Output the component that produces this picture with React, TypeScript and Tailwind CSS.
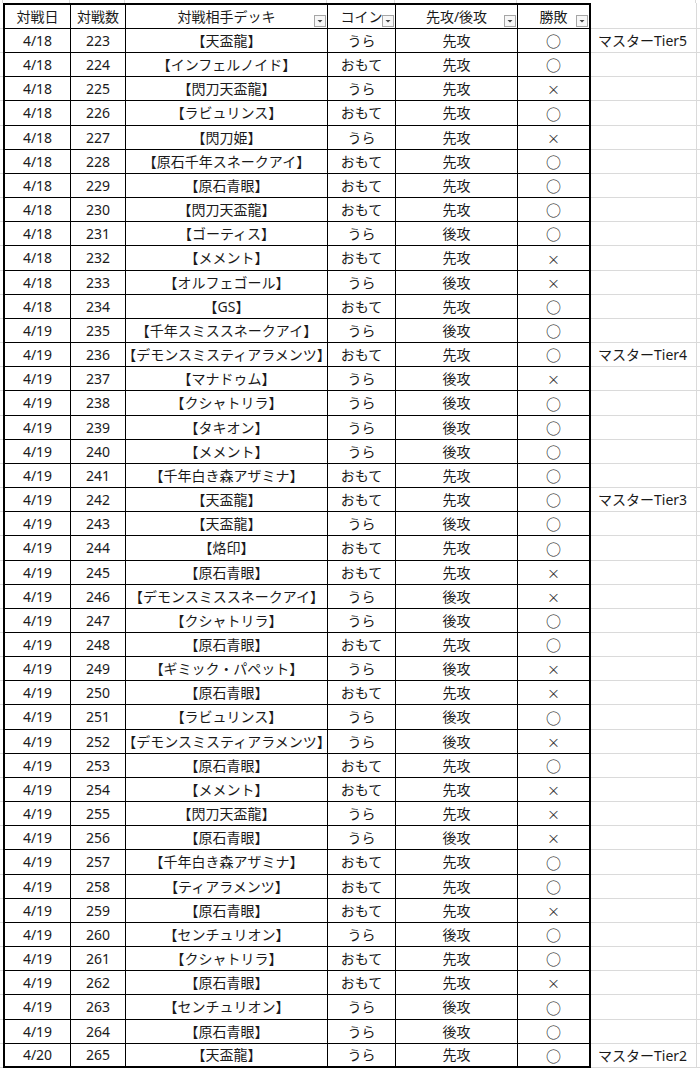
import { FC, ReactNode } from "react";

type Match = {
  date: string;
  no: number;
  deck: string;
  coin: string;
  order: string;
  win: boolean;
  note?: string;
};

const rows: Match[] = [
  { date: "4/18", no: 223, deck: "【天盃龍】", coin: "うら", order: "先攻", win: true, note: "マスターTier5" },
  { date: "4/18", no: 224, deck: "【インフェルノイド】", coin: "おもて", order: "先攻", win: true },
  { date: "4/18", no: 225, deck: "【閃刀天盃龍】", coin: "うら", order: "先攻", win: false },
  { date: "4/18", no: 226, deck: "【ラビュリンス】", coin: "おもて", order: "先攻", win: true },
  { date: "4/18", no: 227, deck: "【閃刀姫】", coin: "うら", order: "先攻", win: false },
  { date: "4/18", no: 228, deck: "【原石千年スネークアイ】", coin: "おもて", order: "先攻", win: true },
  { date: "4/18", no: 229, deck: "【原石青眼】", coin: "おもて", order: "先攻", win: true },
  { date: "4/18", no: 230, deck: "【閃刀天盃龍】", coin: "おもて", order: "先攻", win: true },
  { date: "4/18", no: 231, deck: "【ゴーティス】", coin: "うら", order: "後攻", win: true },
  { date: "4/18", no: 232, deck: "【メメント】", coin: "おもて", order: "先攻", win: false },
  { date: "4/18", no: 233, deck: "【オルフェゴール】", coin: "うら", order: "後攻", win: false },
  { date: "4/18", no: 234, deck: "【GS】", coin: "おもて", order: "先攻", win: true },
  { date: "4/19", no: 235, deck: "【千年スミススネークアイ】", coin: "うら", order: "後攻", win: true },
  { date: "4/19", no: 236, deck: "【デモンスミスティアラメンツ】", coin: "おもて", order: "先攻", win: true, note: "マスターTier4" },
  { date: "4/19", no: 237, deck: "【マナドゥム】", coin: "うら", order: "後攻", win: false },
  { date: "4/19", no: 238, deck: "【クシャトリラ】", coin: "うら", order: "後攻", win: true },
  { date: "4/19", no: 239, deck: "【タキオン】", coin: "うら", order: "後攻", win: true },
  { date: "4/19", no: 240, deck: "【メメント】", coin: "うら", order: "後攻", win: true },
  { date: "4/19", no: 241, deck: "【千年白き森アザミナ】", coin: "おもて", order: "先攻", win: true },
  { date: "4/19", no: 242, deck: "【天盃龍】", coin: "おもて", order: "先攻", win: true, note: "マスターTier3" },
  { date: "4/19", no: 243, deck: "【天盃龍】", coin: "うら", order: "後攻", win: true },
  { date: "4/19", no: 244, deck: "【烙印】", coin: "おもて", order: "先攻", win: true },
  { date: "4/19", no: 245, deck: "【原石青眼】", coin: "おもて", order: "先攻", win: false },
  { date: "4/19", no: 246, deck: "【デモンスミススネークアイ】", coin: "うら", order: "後攻", win: false },
  { date: "4/19", no: 247, deck: "【クシャトリラ】", coin: "うら", order: "後攻", win: true },
  { date: "4/19", no: 248, deck: "【原石青眼】", coin: "おもて", order: "先攻", win: true },
  { date: "4/19", no: 249, deck: "【ギミック・パペット】", coin: "うら", order: "後攻", win: false },
  { date: "4/19", no: 250, deck: "【原石青眼】", coin: "おもて", order: "先攻", win: false },
  { date: "4/19", no: 251, deck: "【ラビュリンス】", coin: "うら", order: "後攻", win: true },
  { date: "4/19", no: 252, deck: "【デモンスミスティアラメンツ】", coin: "うら", order: "後攻", win: false },
  { date: "4/19", no: 253, deck: "【原石青眼】", coin: "おもて", order: "先攻", win: true },
  { date: "4/19", no: 254, deck: "【メメント】", coin: "おもて", order: "先攻", win: false },
  { date: "4/19", no: 255, deck: "【閃刀天盃龍】", coin: "うら", order: "先攻", win: false },
  { date: "4/19", no: 256, deck: "【原石青眼】", coin: "うら", order: "後攻", win: false },
  { date: "4/19", no: 257, deck: "【千年白き森アザミナ】", coin: "おもて", order: "先攻", win: true },
  { date: "4/19", no: 258, deck: "【ティアラメンツ】", coin: "おもて", order: "先攻", win: true },
  { date: "4/19", no: 259, deck: "【原石青眼】", coin: "おもて", order: "先攻", win: false },
  { date: "4/19", no: 260, deck: "【センチュリオン】", coin: "うら", order: "後攻", win: true },
  { date: "4/19", no: 261, deck: "【クシャトリラ】", coin: "おもて", order: "先攻", win: true },
  { date: "4/19", no: 262, deck: "【原石青眼】", coin: "おもて", order: "先攻", win: false },
  { date: "4/19", no: 263, deck: "【センチュリオン】", coin: "うら", order: "後攻", win: true },
  { date: "4/19", no: 264, deck: "【原石青眼】", coin: "うら", order: "後攻", win: true },
  { date: "4/20", no: 265, deck: "【天盃龍】", coin: "うら", order: "先攻", win: true, note: "マスターTier2" },
];

// excel row lines don't land on whole pixels, so rows alternate 24/25px
const lineAt = (n: number) => Math.round(28 + 24.16 * n);

const cellBase =
  "relative flex shrink-0 items-center justify-center whitespace-nowrap border-r border-b border-black";

const cjk = { fontFamily: '"Noto Sans CJK JP", sans-serif' };

const FilterButton: FC = () => (
  <span className="absolute right-[1px] bottom-[1px] flex h-[12px] w-[12px] items-center justify-center border border-[#a6a6a6] bg-[#f7f7f7]">
    <svg width="8" height="8" viewBox="0 0 8 8">
      <path d="M1.5 3 L6.5 3 L4 5.5 Z" fill="#444" />
    </svg>
  </span>
);

const SideCell: FC<{ children?: ReactNode; h: string }> = ({ children, h }) => (
  <>
    <div
      className={`${h} flex w-[106px] shrink-0 items-center whitespace-nowrap border-r border-b border-[#dadada] pl-[7px]`}
    >
      {children}
    </div>
    <div className={`${h} flex-1 border-b border-[#dadada]`} />
  </>
);

export default function App() {
  return (
    <div
      className="min-h-[1069px] w-[700px] overflow-hidden bg-white text-[14px] leading-none text-[#1a1a1a]"
      style={{ fontFamily: '"Noto Sans", "Noto Sans CJK JP", sans-serif' }}
    >
      {/* gridline strip above the table */}
      <div className="flex h-[3px]">
        <div className="w-[3px] shrink-0 border-r border-[#dadada]" />
        <div className="w-[67px] shrink-0 border-r border-[#dadada]" />
        <div className="w-[55px] shrink-0 border-r border-[#dadada]" />
        <div className="w-[202px] shrink-0 border-r border-[#dadada]" />
        <div className="w-[68px] shrink-0 border-r border-[#dadada]" />
        <div className="w-[122px] shrink-0 border-r border-[#dadada]" />
        <div className="w-[73px] shrink-0" />
        <div className="w-[106px] shrink-0 border-r border-[#dadada]" />
      </div>

      {/* header */}
      <div className="flex h-[26px]">
        <div className="w-[3px] shrink-0 border-b border-[#dadada]" />
        <div className={`${cellBase} w-[68px] border-t-2 border-l-2`}>対戦日</div>
        <div className={`${cellBase} w-[55px] border-t-2`}>対戦数</div>
        <div className={`${cellBase} w-[202px] border-t-2`}>
          対戦相手デッキ
          <FilterButton />
        </div>
        <div className={`${cellBase} w-[68px] border-t-2`}>
          コイン
          <FilterButton />
        </div>
        <div className={`${cellBase} w-[122px] border-t-2`}>
          先攻/後攻
          <FilterButton />
        </div>
        <div className={`${cellBase} w-[73px] border-t-2 border-r-2`}>
          勝敗
          <FilterButton />
        </div>
        <SideCell h="h-[26px]" />
      </div>

      {rows.map((r, i) => {
        const isLast = i === rows.length - 1;
        const h = lineAt(i + 1) - lineAt(i) === 25 ? "h-[25px]" : "h-[24px]";
        const b = isLast ? "border-b-2" : "";
        return (
          <div key={r.no} className={`flex ${h}`}>
            <div className="w-[3px] shrink-0 border-b border-[#dadada]" />
            <div className={`${cellBase} ${b} w-[68px] border-l-2`}>{r.date}</div>
            <div className={`${cellBase} ${b} w-[55px]`}>{r.no}</div>
            <div className={`${cellBase} ${b} w-[202px]`}>{r.deck}</div>
            <div className={`${cellBase} ${b} w-[68px]`}>{r.coin}</div>
            <div className={`${cellBase} ${b} w-[122px]`}>{r.order}</div>
            <div className={`${cellBase} ${b} w-[73px] border-r-2`}>
              {r.win ? (
                <span className="text-[15px]" style={cjk}>
                  ○
                </span>
              ) : (
                <span className="text-[13px] text-[#333]" style={cjk}>
                  ×
                </span>
              )}
            </div>
            <SideCell h={h}>{r.note}</SideCell>
          </div>
        );
      })}
    </div>
  );
}
